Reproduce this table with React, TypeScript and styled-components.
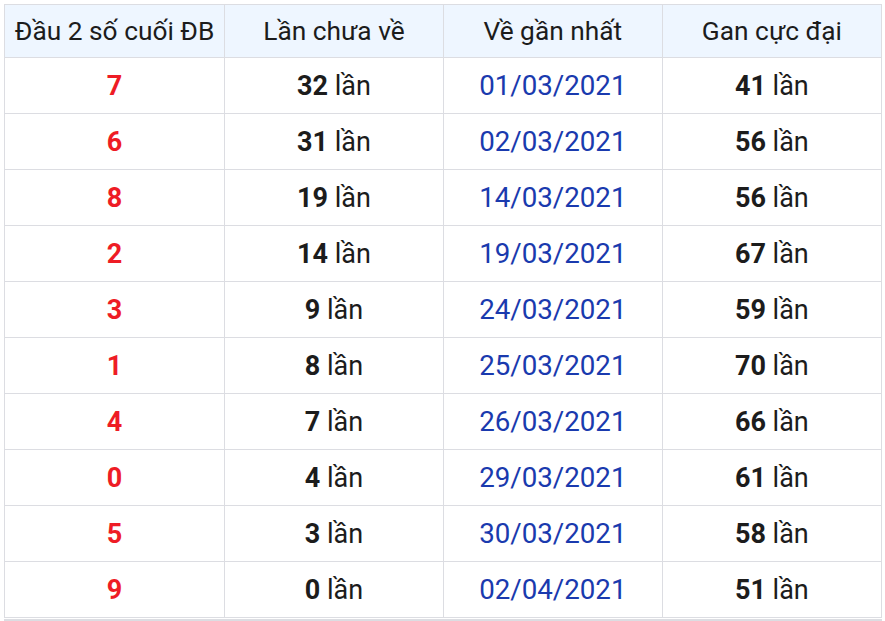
import React from "react";
import styled, { createGlobalStyle } from "styled-components";

type Row = {
  head: string;
  missed: number;
  lastDate: string;
  maxGan: number;
};

const rows: Row[] = [
  { head: "7", missed: 32, lastDate: "01/03/2021", maxGan: 41 },
  { head: "6", missed: 31, lastDate: "02/03/2021", maxGan: 56 },
  { head: "8", missed: 19, lastDate: "14/03/2021", maxGan: 56 },
  { head: "2", missed: 14, lastDate: "19/03/2021", maxGan: 67 },
  { head: "3", missed: 9, lastDate: "24/03/2021", maxGan: 59 },
  { head: "1", missed: 8, lastDate: "25/03/2021", maxGan: 70 },
  { head: "4", missed: 7, lastDate: "26/03/2021", maxGan: 66 },
  { head: "0", missed: 4, lastDate: "29/03/2021", maxGan: 61 },
  { head: "5", missed: 3, lastDate: "30/03/2021", maxGan: 58 },
  { head: "9", missed: 0, lastDate: "02/04/2021", maxGan: 51 },
];

const GlobalStyle = createGlobalStyle`
  html, body {
    margin: 0;
    padding: 0;
    background: #ffffff;
    overflow: hidden;
  }
  body {
    font-family: Roboto, "Noto Sans", "Liberation Sans", sans-serif;
    color: #1c1c1c;
  }
`;

const Page = styled.div`
  padding: 4px 3px 0 4px;
`;

const Table = styled.table`
  width: 878px;
  border-collapse: collapse;
  table-layout: fixed;
  font-size: 27px;
`;

const HeadCell = styled.th<{ $w: string }>`
  width: ${(p) => p.$w};
  height: 52px;
  padding: 0;
  background: #eef6ff;
  border: 1px solid #dcdde2;
  font-size: 26.3px;
  font-weight: 400;
  text-align: center;
  color: #1c1c1c;
  white-space: nowrap;
`;

const Cell = styled.td`
  height: 55px;
  padding: 0;
  border: 1px solid #dcdde2;
  text-align: center;
  white-space: nowrap;
`;

const HeadNumber = styled.span`
  color: #ee1c25;
  font-weight: 700;
`;

const Count = styled.b`
  font-weight: 700;
  color: #1c1c1c;
`;

const DateText = styled.span`
  color: #1a3aae;
  font-size: 27.7px;
`;

const NextTable = styled.div`
  width: 876px;
  height: 20px;
  margin-top: 1px;
  background: #eef6ff;
  border: 1px solid #dcdde2;
  border-top-width: 2px;
`;

const Times: React.FC<{ n: number }> = ({ n }) => (
  <>
    <Count>{n}</Count> lần
  </>
);

export default function App() {
  return (
    <Page>
      <GlobalStyle />
      <Table>
        <thead>
          <tr>
            <HeadCell $w="25.1%">Đầu 2 số cuối ĐB</HeadCell>
            <HeadCell $w="24.95%">Lần chưa về</HeadCell>
            <HeadCell $w="24.95%">Về gần nhất</HeadCell>
            <HeadCell $w="25%">Gan cực đại</HeadCell>
          </tr>
        </thead>
        <tbody>
          {rows.map((r) => (
            <tr key={r.head}>
              <Cell>
                <HeadNumber>{r.head}</HeadNumber>
              </Cell>
              <Cell>
                <Times n={r.missed} />
              </Cell>
              <Cell>
                <DateText>{r.lastDate}</DateText>
              </Cell>
              <Cell>
                <Times n={r.maxGan} />
              </Cell>
            </tr>
          ))}
        </tbody>
      </Table>
      <NextTable />
    </Page>
  );
}
